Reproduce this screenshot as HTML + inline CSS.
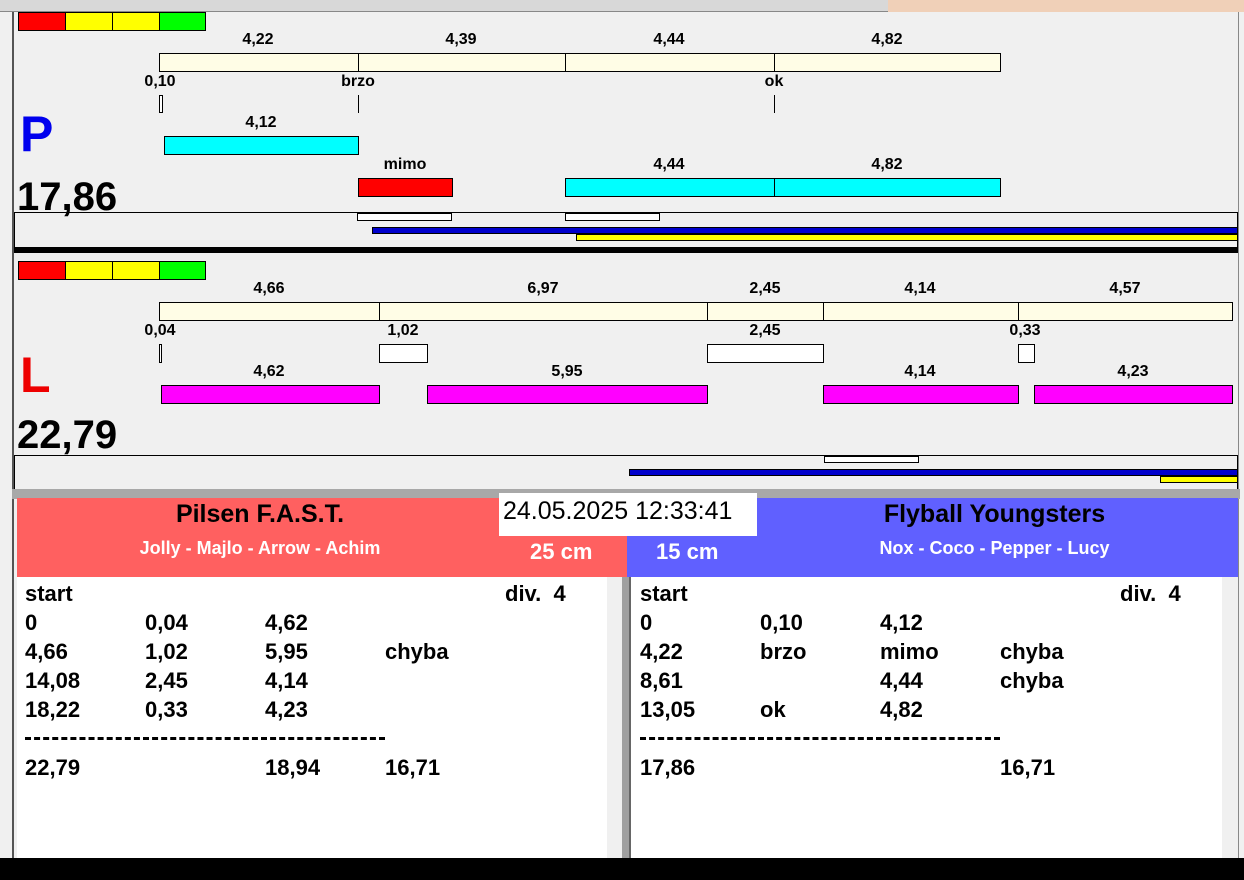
<!DOCTYPE html><html><head><style>
body{margin:0;width:1244px;height:880px;position:relative;overflow:hidden;background:#fff;font-family:"Liberation Sans",Arial,sans-serif;font-weight:bold}
div{position:absolute;box-sizing:border-box}
.b{border:1px solid #000}
.c{background:#fffde6}.cy{background:#00ffff}.m{background:#ff00ff}.w{background:#fff}
.l{font-size:16px;transform:translateX(-50%);white-space:nowrap;line-height:18px}
.t{font-size:22px;line-height:29px;white-space:nowrap}
</style></head><body>
<div style="left:0;top:0;width:1244px;height:880px;background:#f0f0f0"></div>
<div style="left:0;top:0;width:888px;height:12px;background:#d8d8d8;border-bottom:1px solid #888"></div>
<div style="left:888px;top:0;width:356px;height:12px;background:#f0d0b8"></div>
<div style="left:12px;top:12px;width:2px;height:848px;background:#555"></div>
<div style="left:1238px;top:12px;width:1px;height:848px;background:#888"></div>
<div class="b" style="left:18px;top:12px;width:48px;height:19px;background:#f00"></div>
<div class="b" style="left:65px;top:12px;width:48px;height:19px;background:#ff0"></div>
<div class="b" style="left:112px;top:12px;width:48px;height:19px;background:#ff0"></div>
<div class="b" style="left:159px;top:12px;width:47px;height:19px;background:#0f0"></div>
<div class="l" style="left:258px;top:31px">4,22</div><div class="l" style="left:461px;top:31px">4,39</div><div class="l" style="left:669px;top:31px">4,44</div><div class="l" style="left:887px;top:31px">4,82</div>
<div class="b c" style="left:159px;top:53px;width:200px;height:19px"></div>
<div class="b c" style="left:358px;top:53px;width:208px;height:19px"></div>
<div class="b c" style="left:565px;top:53px;width:210px;height:19px"></div>
<div class="b c" style="left:774px;top:53px;width:227px;height:19px"></div>
<div class="l" style="left:160px;top:73px">0,10</div><div class="l" style="left:358px;top:73px">brzo</div><div class="l" style="left:774px;top:73px">ok</div>
<div class="b w" style="left:159px;top:95px;width:4px;height:18px"></div>
<div style="left:358px;top:95px;width:1px;height:18px;background:#000"></div>
<div style="left:774px;top:95px;width:1px;height:18px;background:#000"></div>
<div style="left:20px;top:104px;font-size:50px;color:#0000ee;line-height:60px">P</div>
<div class="l" style="left:261px;top:114px">4,12</div>
<div class="b cy" style="left:164px;top:136px;width:195px;height:19px"></div>
<div class="l" style="left:405px;top:156px">mimo</div><div class="l" style="left:669px;top:156px">4,44</div><div class="l" style="left:887px;top:156px">4,82</div>
<div class="b" style="left:358px;top:178px;width:95px;height:19px;background:#f00"></div>
<div class="b cy" style="left:565px;top:178px;width:210px;height:19px"></div>
<div class="b cy" style="left:774px;top:178px;width:227px;height:19px"></div>
<div style="left:17px;top:175px;font-size:40px;line-height:44px">17,86</div>
<div class="b" style="left:14px;top:212px;width:1224px;height:37px;border-bottom:none"></div>
<div class="b w" style="left:357px;top:213px;width:95px;height:8px"></div>
<div class="b w" style="left:565px;top:213px;width:95px;height:8px"></div>
<div class="b" style="left:372px;top:227px;width:866px;height:7px;background:#00c"></div>
<div class="b" style="left:576px;top:234px;width:662px;height:7px;background:#ff0"></div>
<div style="left:14px;top:247px;width:1224px;height:6px;background:#000"></div>
<div class="b" style="left:18px;top:261px;width:48px;height:19px;background:#f00"></div>
<div class="b" style="left:65px;top:261px;width:48px;height:19px;background:#ff0"></div>
<div class="b" style="left:112px;top:261px;width:48px;height:19px;background:#ff0"></div>
<div class="b" style="left:159px;top:261px;width:47px;height:19px;background:#0f0"></div>
<div class="l" style="left:269px;top:280px">4,66</div><div class="l" style="left:543px;top:280px">6,97</div><div class="l" style="left:765px;top:280px">2,45</div><div class="l" style="left:920px;top:280px">4,14</div><div class="l" style="left:1125px;top:280px">4,57</div>
<div class="b c" style="left:159px;top:302px;width:221px;height:19px"></div>
<div class="b c" style="left:379px;top:302px;width:329px;height:19px"></div>
<div class="b c" style="left:707px;top:302px;width:117px;height:19px"></div>
<div class="b c" style="left:823px;top:302px;width:196px;height:19px"></div>
<div class="b c" style="left:1018px;top:302px;width:215px;height:19px"></div>
<div class="l" style="left:160px;top:322px">0,04</div><div class="l" style="left:403px;top:322px">1,02</div><div class="l" style="left:765px;top:322px">2,45</div><div class="l" style="left:1025px;top:322px">0,33</div>
<div class="b w" style="left:159px;top:344px;width:3px;height:19px"></div>
<div class="b w" style="left:379px;top:344px;width:49px;height:19px"></div>
<div class="b w" style="left:707px;top:344px;width:117px;height:19px"></div>
<div class="b w" style="left:1018px;top:344px;width:17px;height:19px"></div>
<div style="left:20px;top:345px;font-size:50px;color:#ee0000;line-height:60px">L</div>
<div class="l" style="left:269px;top:363px">4,62</div><div class="l" style="left:567px;top:363px">5,95</div><div class="l" style="left:920px;top:363px">4,14</div><div class="l" style="left:1133px;top:363px">4,23</div>
<div class="b m" style="left:161px;top:385px;width:219px;height:19px"></div>
<div class="b m" style="left:427px;top:385px;width:281px;height:19px"></div>
<div class="b m" style="left:823px;top:385px;width:196px;height:19px"></div>
<div class="b m" style="left:1034px;top:385px;width:199px;height:19px"></div>
<div style="left:17px;top:413px;font-size:40px;line-height:44px">22,79</div>
<div class="b" style="left:14px;top:455px;width:1224px;height:34px;border-bottom:none"></div>
<div class="b w" style="left:824px;top:456px;width:95px;height:7px"></div>
<div class="b" style="left:629px;top:469px;width:609px;height:7px;background:#00c"></div>
<div class="b" style="left:1160px;top:476px;width:78px;height:7px;background:#ff0"></div>
<div style="left:12px;top:489px;width:1228px;height:10px;background:#a8a8a8"></div>
<div style="left:17px;top:498px;width:610px;height:79px;background:#ff6060"></div>
<div style="left:627px;top:498px;width:611px;height:79px;background:#6060ff"></div>
<div style="left:17px;top:500px;width:486px;text-align:center;font-size:25px">Pilsen F.A.S.T.</div>
<div style="left:17px;top:538px;width:486px;text-align:center;font-size:18px;color:#fff">Jolly - Majlo - Arrow - Achim</div>
<div style="left:530px;top:539px;font-size:22px;color:#fff">25 cm</div>
<div style="left:656px;top:539px;font-size:22px;color:#fff">15 cm</div>
<div style="left:757px;top:500px;width:475px;text-align:center;font-size:25px">Flyball Youngsters</div>
<div style="left:757px;top:538px;width:475px;text-align:center;font-size:18px;color:#fff">Nox - Coco - Pepper - Lucy</div>
<div style="left:499px;top:493px;width:258px;height:43px;background:#fff;font-weight:normal;font-size:25px;line-height:36px;padding-left:4px">24.05.2025 12:33:41</div>
<div style="left:17px;top:577px;width:590px;height:281px;background:#fff"></div>
<div style="left:607px;top:577px;width:15px;height:281px;background:#f0f0f0"></div>
<div style="left:622px;top:577px;width:9px;height:281px;background:#a0a0a0;border-right:2px solid #666"></div>
<div style="left:631px;top:577px;width:591px;height:281px;background:#fff"></div>
<div style="left:1222px;top:577px;width:16px;height:281px;background:#f0f0f0"></div>
<div style="left:0;top:858px;width:1244px;height:22px;background:#000"></div>
<div class="t" style="left:25px;top:579px">start</div><div class="t" style="left:505px;top:579px">div.&nbsp; 4</div>
<div class="t" style="left:25px;top:608px">0</div><div class="t" style="left:145px;top:608px">0,04</div><div class="t" style="left:265px;top:608px">4,62</div>
<div class="t" style="left:25px;top:637px">4,66</div><div class="t" style="left:145px;top:637px">1,02</div><div class="t" style="left:265px;top:637px">5,95</div><div class="t" style="left:385px;top:637px">chyba</div>
<div class="t" style="left:25px;top:666px">14,08</div><div class="t" style="left:145px;top:666px">2,45</div><div class="t" style="left:265px;top:666px">4,14</div>
<div class="t" style="left:25px;top:695px">18,22</div><div class="t" style="left:145px;top:695px">0,33</div><div class="t" style="left:265px;top:695px">4,23</div>
<div style="left:25px;top:737px;width:360px;border-top:3px dashed #000"></div>
<div class="t" style="left:25px;top:753px">22,79</div><div class="t" style="left:265px;top:753px">18,94</div><div class="t" style="left:385px;top:753px">16,71</div>
<div class="t" style="left:640px;top:579px">start</div><div class="t" style="left:1120px;top:579px">div.&nbsp; 4</div>
<div class="t" style="left:640px;top:608px">0</div><div class="t" style="left:760px;top:608px">0,10</div><div class="t" style="left:880px;top:608px">4,12</div>
<div class="t" style="left:640px;top:637px">4,22</div><div class="t" style="left:760px;top:637px">brzo</div><div class="t" style="left:880px;top:637px">mimo</div><div class="t" style="left:1000px;top:637px">chyba</div>
<div class="t" style="left:640px;top:666px">8,61</div><div class="t" style="left:880px;top:666px">4,44</div><div class="t" style="left:1000px;top:666px">chyba</div>
<div class="t" style="left:640px;top:695px">13,05</div><div class="t" style="left:760px;top:695px">ok</div><div class="t" style="left:880px;top:695px">4,82</div>
<div style="left:640px;top:737px;width:360px;border-top:3px dashed #000"></div>
<div class="t" style="left:640px;top:753px">17,86</div><div class="t" style="left:1000px;top:753px">16,71</div>
</body></html>
